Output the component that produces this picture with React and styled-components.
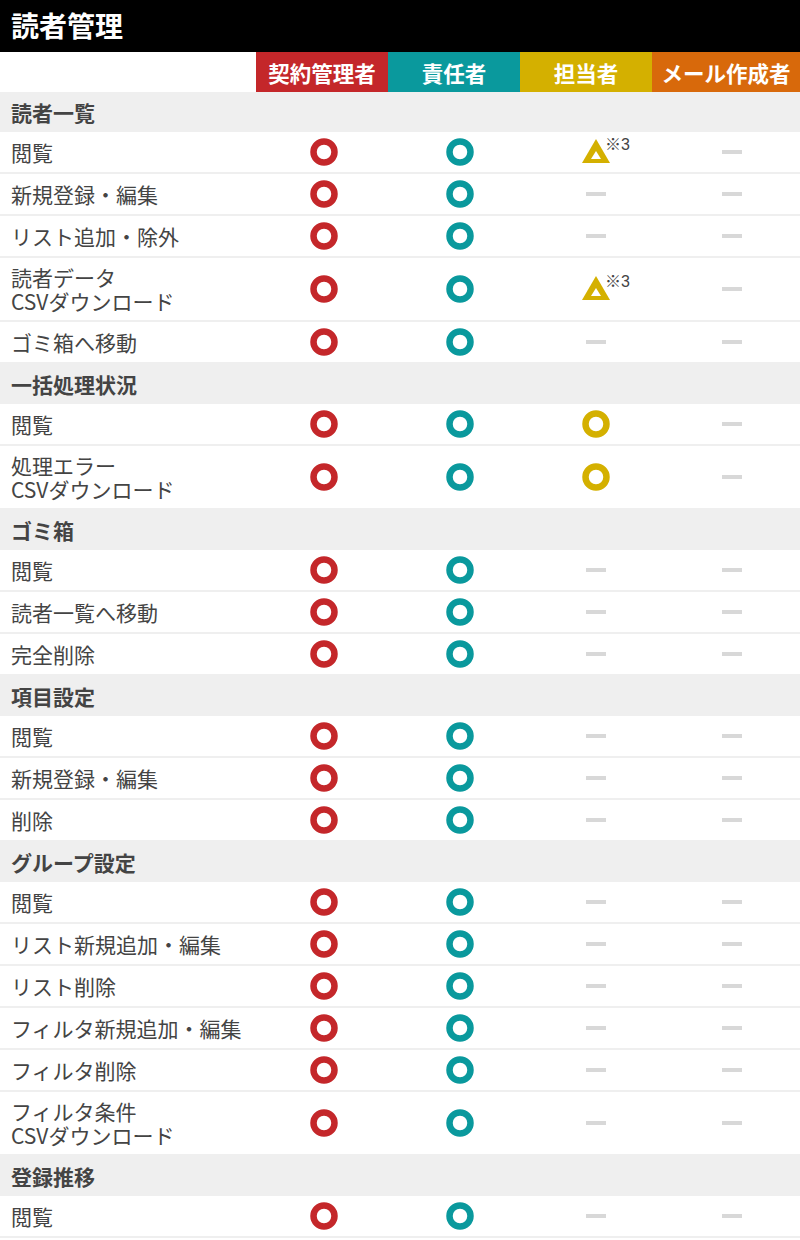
import React from "react";
import styled, { createGlobalStyle } from "styled-components";

const GlobalStyle = createGlobalStyle`
  body {
    margin: 0;
    background: #ffffff;
    font-family: "Noto Sans CJK JP", "Noto Sans", sans-serif;
  }
`;

const COLORS = {
  red: "#c4272a",
  teal: "#0a999d",
  yellow: "#d4b000",
  orange: "#d8690b",
};

const roles = [
  { name: "契約管理者", color: COLORS.red },
  { name: "責任者", color: COLORS.teal },
  { name: "担当者", color: COLORS.yellow },
  { name: "メール作成者", color: COLORS.orange },
];

// o = red/teal ring, y = yellow ring, t = triangle with note, - = dash
const sections = [
  {
    title: "読者一覧",
    rows: [
      ["閲覧", "t"],
      ["新規登録・編集", "-"],
      ["リスト追加・除外", "-"],
      ["読者データ\nCSVダウンロード", "t"],
      ["ゴミ箱へ移動", "-"],
    ],
  },
  {
    title: "一括処理状況",
    rows: [
      ["閲覧", "y"],
      ["処理エラー\nCSVダウンロード", "y"],
    ],
  },
  {
    title: "ゴミ箱",
    rows: [
      ["閲覧", "-"],
      ["読者一覧へ移動", "-"],
      ["完全削除", "-"],
    ],
  },
  {
    title: "項目設定",
    rows: [
      ["閲覧", "-"],
      ["新規登録・編集", "-"],
      ["削除", "-"],
    ],
  },
  {
    title: "グループ設定",
    rows: [
      ["閲覧", "-"],
      ["リスト新規追加・編集", "-"],
      ["リスト削除", "-"],
      ["フィルタ新規追加・編集", "-"],
      ["フィルタ削除", "-"],
      ["フィルタ条件\nCSVダウンロード", "-"],
    ],
  },
  {
    title: "登録推移",
    rows: [["閲覧", "-"]],
  },
];

export default function App() {
  return (
    <Page>
      <GlobalStyle />
      <TitleBar>読者管理</TitleBar>
      <HeadRow>
        <span />
        {roles.map((r) => (
          <RoleHead key={r.name} $bg={r.color}>
            {r.name}
          </RoleHead>
        ))}
      </HeadRow>
      {sections.map((s) => (
        <section key={s.title}>
          <SectionHead>{s.title}</SectionHead>
          {s.rows.map(([label, third], i) => (
            <Row key={i}>
              <Label>{label}</Label>
              <Cell>
                <Ring color={COLORS.red} />
              </Cell>
              <Cell>
                <Ring color={COLORS.teal} />
              </Cell>
              <Cell>
                {third === "t" && <Triangle />}
                {third === "y" && <Ring color={COLORS.yellow} />}
                {third === "-" && <Dash />}
              </Cell>
              <Cell>
                <Dash />
              </Cell>
            </Row>
          ))}
        </section>
      ))}
    </Page>
  );
}

function Ring({ color }) {
  return (
    <svg width="28" height="28" viewBox="0 0 28 28">
      <circle cx="14" cy="14" r="10.5" fill="none" stroke={color} strokeWidth="6.5" />
    </svg>
  );
}

function Triangle() {
  return (
    <TriWrap>
      <svg width="28" height="24" viewBox="0 0 28 24">
        <polygon points="0,24 14,0 28,24" fill={COLORS.yellow} />
        <polygon points="9,20 14,12 19,20" fill="#ffffff" />
      </svg>
      <Note>※3</Note>
    </TriWrap>
  );
}

const Page = styled.div`
  width: 800px;
`;

const TitleBar = styled.h1`
  margin: 0;
  height: 52px;
  background: #000000;
  color: #ffffff;
  font-size: 28px;
  font-weight: 700;
  line-height: 50px;
  padding-left: 11px;
`;

const HeadRow = styled.div`
  display: grid;
  grid-template-columns: 256px 132px 132px 132px 1fr;
  height: 40px;
`;

const RoleHead = styled.div`
  background: ${(p) => p.$bg};
  color: #ffffff;
  font-size: 21.5px;
  font-weight: 700;
  display: flex;
  align-items: center;
  justify-content: center;
  white-space: nowrap;
`;

const SectionHead = styled.div`
  height: 40px;
  background: #efefef;
  color: #444444;
  font-size: 21px;
  font-weight: 700;
  display: flex;
  align-items: center;
  padding-left: 11px;
`;

const Row = styled.div`
  display: grid;
  grid-template-columns: 256px repeat(4, 136px);
  min-height: 40px;
  border-bottom: 2px solid #efefef;
`;

const Label = styled.div`
  color: #444444;
  font-size: 21px;
  line-height: 24px;
  padding: 7px 0 7px 11px;
  white-space: pre-line;
  display: flex;
  align-items: center;
`;

const Cell = styled.div`
  display: flex;
  align-items: center;
  justify-content: center;
`;

const Dash = styled.div`
  width: 20px;
  height: 4px;
  background: #d8d8d8;
`;

const TriWrap = styled.div`
  position: relative;
  display: flex;
  margin-top: -2px;
`;

const Note = styled.span`
  position: absolute;
  left: 23px;
  top: -8px;
  font-family: "Liberation Sans", "Noto Sans CJK JP", sans-serif;
  font-size: 16px;
  color: #444444;
  white-space: nowrap;
`;
